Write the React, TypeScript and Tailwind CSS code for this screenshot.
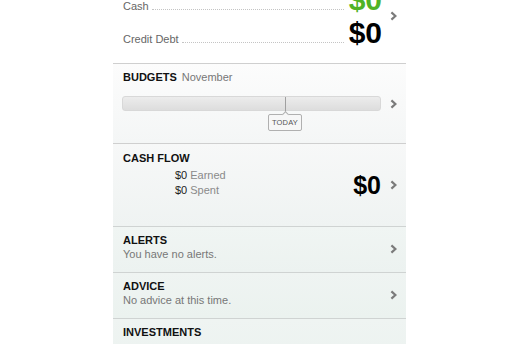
import React from "react";

const Chevron = () => (
  <svg width="7" height="10" viewBox="0 0 7 10" className="shrink-0 block">
    <polyline points="1.4,1.4 5.4,5 1.4,8.6" fill="none" stroke="#7b7b7b" strokeWidth="2.2" />
  </svg>
);

const Row = ({ label, color }: { label: string; color: string }) => (
  <div className="h-[33px] flex items-baseline">
    <span className="text-[11px] text-[#666666]">{label}</span>
    <span className="flex-1 ml-[3px] mr-[5px] border-b border-dotted border-[#c4c4c4]" />
    <span className={`text-[30px] leading-[30px] font-bold ${color}`}>$0</span>
  </div>
);

const ListItem = ({ title, sub, bg }: { title: string; sub: string; bg: string }) => (
  <div className={`h-[46px] border-b border-[#cfd3d2] flex items-start pt-[6px] pl-[10px] pr-[9px] ${bg}`}>
    <div className="flex-1 flex flex-col text-[11px] leading-[14px]">
      <span className="font-bold text-[#111111]">{title}</span>
      <span className="text-[#777777]">{sub}</span>
    </div>
    <div className="mt-[11px]">
      <Chevron />
    </div>
  </div>
);

export default function App() {
  return (
    <div className="w-[520px] h-[344px] overflow-hidden bg-white font-['Liberation_Sans',Arial,sans-serif]">
      <div className="ml-[113px] w-[293px] -mt-[15px]">
        {/* Net worth rows */}
        <div className="h-[79px] border-b border-[#cfcfcf] bg-white flex items-start pl-[10px] pr-[9px]">
          <div className="flex-1 flex flex-col">
            <Row label="Cash" color="text-[#4fb326]" />
            <Row label="Credit Debt" color="text-black" />
          </div>
          <div className="ml-[8px] mt-[26px]">
            <Chevron />
          </div>
        </div>

        {/* Budgets */}
        <div className="h-[80px] border-b border-[#cfcfcf] bg-gradient-to-b from-[#fcfcfc] to-[#f4f6f6] pt-[6px]">
          <div className="pl-[10px] text-[11px] leading-[14px]">
            <span className="font-bold text-[#111111]">BUDGETS</span>
            <span className="ml-[5px] text-[#777777]">November</span>
          </div>
          <div className="mt-[12px] flex items-center pl-[9px] pr-[9px]">
            <div className="relative flex-1 h-[15px] rounded-[3px] bg-gradient-to-b from-[#ececec] to-[#dddddd] border border-[#d8d8d8]">
              <div className="absolute left-[162px] top-0 w-px h-[17px] bg-[#a0a0a0]" />
              <div className="absolute left-[145px] top-[17px] w-[34px] h-[17px] rounded-[2px] border border-[#b0b0b0] bg-[#f7f7f7] flex items-center justify-center">
                <div className="absolute -top-[3px] left-[14px] w-[5px] h-[5px] rotate-45 border-l border-t border-[#b0b0b0] bg-[#f7f7f7]" />
                <span className="relative text-[7.5px] leading-none text-[#555555] tracking-[0.2px]">TODAY</span>
              </div>
            </div>
            <div className="ml-[9px]">
              <Chevron />
            </div>
          </div>
        </div>

        {/* Cash flow */}
        <div className="h-[83px] border-b border-[#cfd3d2] bg-gradient-to-b from-[#f7f8f8] to-[#eff3f2] pt-[7px]">
          <div className="pl-[10px] text-[11px] leading-[14px] font-bold text-[#111111]">CASH FLOW</div>
          <div className="flex items-center h-[34px] mt-[3px] pr-[9px]">
            <div className="self-start pl-[62px] flex-1 flex flex-col text-[11px] leading-[15px]">
              <span>
                <span className="text-[#222222]">$0</span>
                <span className="ml-[3px] text-[#8a8a8a]">Earned</span>
              </span>
              <span>
                <span className="text-[#222222]">$0</span>
                <span className="ml-[3px] text-[#8a8a8a]">Spent</span>
              </span>
            </div>
            <span className="text-[25px] leading-[25px] font-bold text-black">$0</span>
            <div className="ml-[9px]">
              <Chevron />
            </div>
          </div>
        </div>

        <ListItem title="ALERTS" sub="You have no alerts." bg="bg-gradient-to-b from-[#f0f5f3] to-[#ecf2f0]" />
        <ListItem title="ADVICE" sub="No advice at this time." bg="bg-gradient-to-b from-[#eff4f2] to-[#ebf2ef]" />

        {/* Investments */}
        <div className="h-[60px] bg-gradient-to-b from-[#eff4f2] to-[#ebf2ef] pt-[6px]">
          <div className="pl-[10px] text-[11px] leading-[14px] font-bold text-[#111111]">INVESTMENTS</div>
          <div className="flex justify-end pr-[26px] mt-[3px]">
            <span className="text-[25px] leading-[25px] font-bold text-black">$0</span>
          </div>
        </div>
      </div>
    </div>
  );
}
